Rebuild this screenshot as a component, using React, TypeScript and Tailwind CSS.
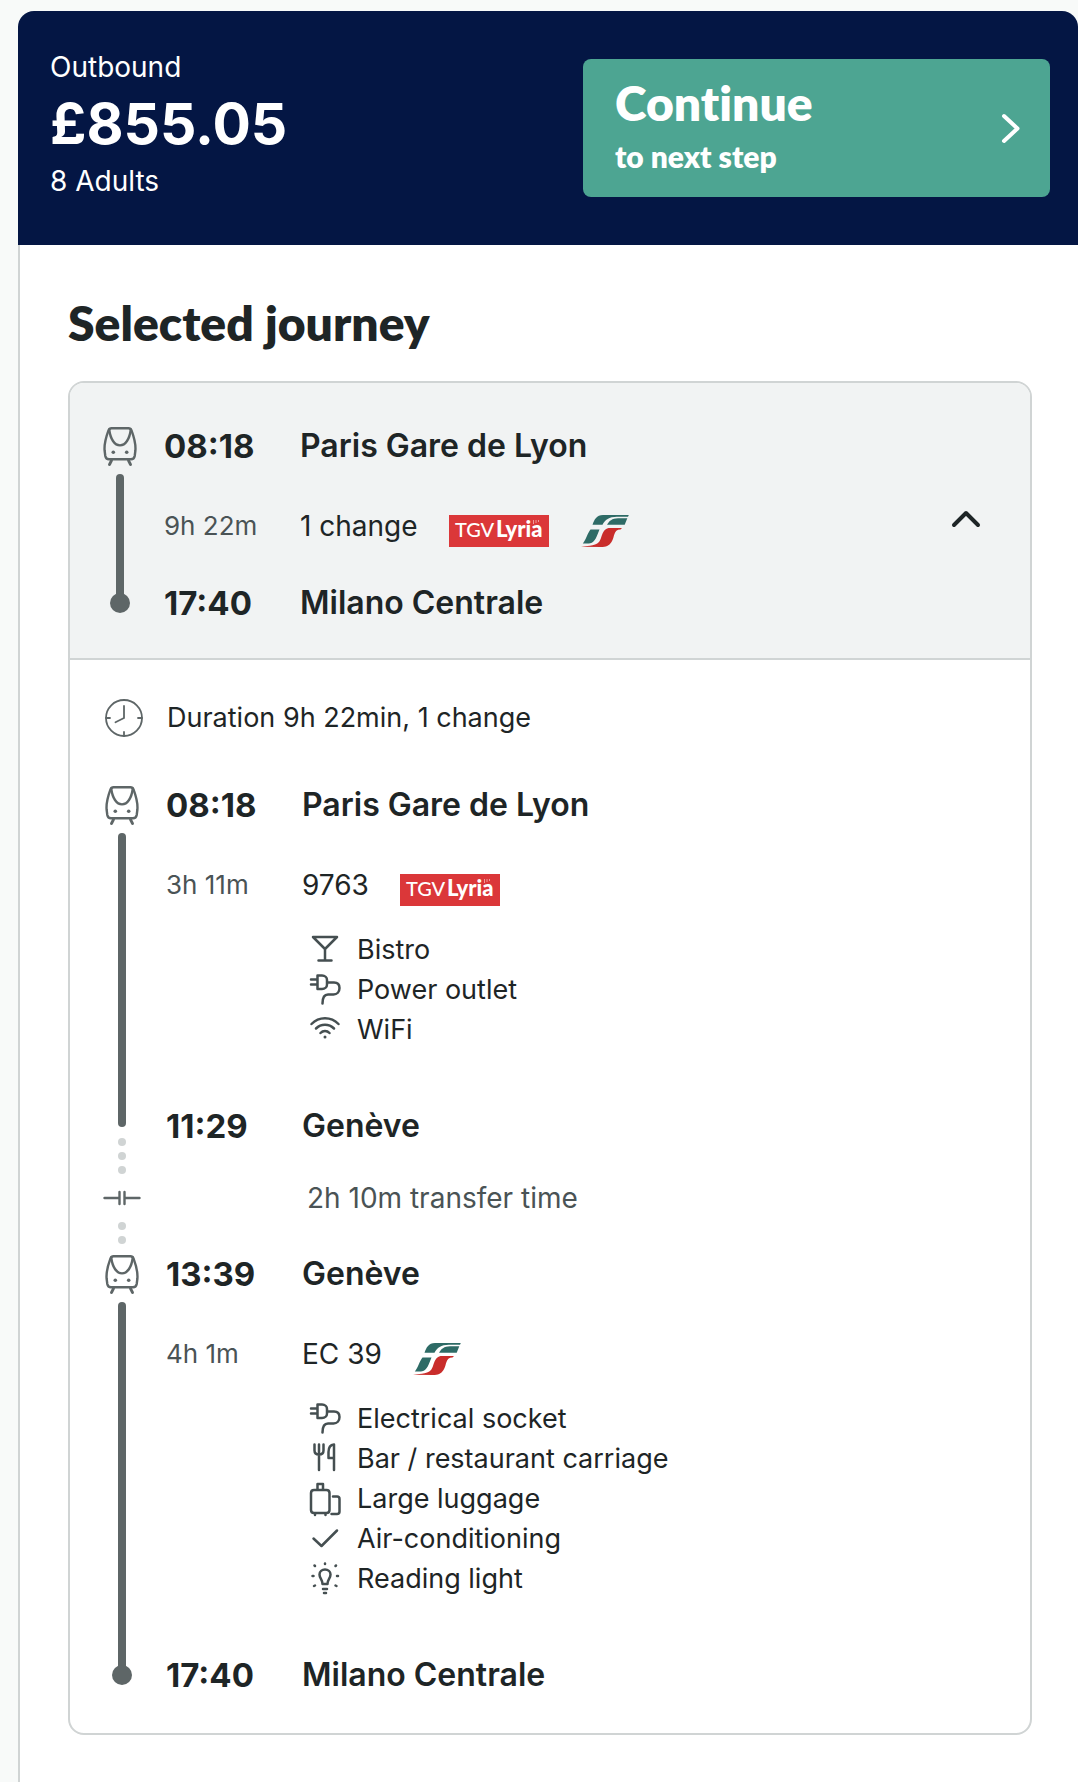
import React from "react";

const INK = "text-[#1e2526]";

function TrainIcon() {
  return (
    <svg width="34" height="40" viewBox="0 0 34 40" fill="none" stroke="#5e6667" strokeWidth="2.400" strokeLinecap="round" strokeLinejoin="round" aria-hidden="true" className="shrink-0">
      <path d="M8.500 2.200H25.500C27 2.200 28 3 28.600 4.600C30.600 10 33 17 32.400 24.500L31.700 30C31.300 32.200 30 33.200 28 33.200H6C4 33.200 2.700 32.200 2.300 30L1.600 24.500C1 17 3.400 10 5.400 4.600C6 3 7 2.200 8.500 2.200Z" />
      <path d="M6.200 3.500C7.400 13 11.500 19.400 17 19.400S26.600 13 27.800 3.500" />
      <path d="M8.500 34.500L6.500 38.500M25.500 34.500L27.500 38.500" strokeWidth="2.800" />
      <circle cx="10.300" cy="26.300" r="1.800" fill="#5e6667" stroke="none" />
      <circle cx="23.700" cy="26.300" r="1.800" fill="#5e6667" stroke="none" />
    </svg>
  );
}

function ClockIcon() {
  return (
    <svg width="38" height="40" viewBox="0 0 38 40" fill="none" stroke="#5e6667" strokeWidth="1.800" strokeLinecap="round" aria-hidden="true">
      <circle cx="19" cy="20" r="18" />
      <path d="M19 8V20L10.500 24.300M19 34V38M1 20H5M33 20H37" />
    </svg>
  );
}

function LyriaLogo() {
  return (
    <svg width="100" height="32" viewBox="0 0 100 32" role="img" aria-label="TGV Lyria">
      <rect width="100" height="32" fill="#db3739" />
      <text x="6" y="22" fontFamily="Lato, sans-serif" fontWeight="500" fontSize="20" fill="#fff">TGV</text>
      <text x="47" y="22" fontFamily="Lato, sans-serif" fontWeight="900" fontSize="22" fill="#fff">Lyria</text>
      <path d="M84.500 5V9M87 5V8M89.500 5V7" stroke="#ee9a9a" strokeWidth="1" />
    </svg>
  );
}

function TrenitaliaLogo() {
  return (
    <svg width="48" height="32" viewBox="0 0 48 32" role="img" aria-label="Trenitalia">
      <path d="M11.500 9.800C13.500 4.500 15.500 0 22 0H47.800L47 1.800H36C28 1.800 24 5 21.500 9.800Z" fill="#2e6b66" />
      <path d="M26 9.800C28 6 31 3.200 37 3.200H46.300L43.700 9.800Z" fill="#2e6b66" />
      <path d="M9.500 14.500H18.500C16 20 14.500 28 8 28.500H1.800C5 25 6.500 18 9.500 14.500Z" fill="#2e6b66" />
      <path d="M0 31.800C4 31 14 31.500 18 27C21.500 23 20.500 13 29 13H41L39.500 14.500C32 14.500 34 22 30.500 27C28 31 25 32 20 32Z" fill="#c92d2b" />
    </svg>
  );
}

function TransferIcon() {
  return (
    <svg width="38" height="16" viewBox="0 0 38 16" fill="none" stroke="#5e6667" strokeWidth="2.400" strokeLinecap="round" aria-hidden="true">
      <path d="M1.500 8H16.500M21.500 8H36.500M16.500 2V14M21.500 2V14" />
    </svg>
  );
}

const icons: Record<string, React.ReactNode> = {
  glass: <path d="M4 5H28L16 17ZM16 17V28.500M9.500 28.500H22.500" />,
  plug: (
    <path d="M8.500 3.500H13C16 3.500 18 5.500 18 8V12.500C18 15 16 17 13 17H8.500ZM2 7.500H8.500M2 12.500H8.500M18 10.500H25C28.500 10.500 30.500 12.500 30.500 16C30.500 20 28 22.500 24.500 22.500H19C15.500 22.500 13.500 25 13.500 31.500" />
  ),
  wifi: (
    <>
      <path d="M2.500 12C10 4.300 22 4.300 29.500 12M7 16.500C12 11.500 20 11.500 25 16.500M11.500 21C14 18.300 18 18.300 20.500 21" />
      <circle cx="16" cy="25" r="1.500" fill="currentColor" stroke="none" />
    </>
  ),
  cutlery: (
    <path d="M5.500 3.500V9.500C5.500 12 7 13.500 10 13.500S14.500 12 14.500 9.500V3.500M10 3.500V29M25 29V3.500C21 4 19.500 7.500 19.500 11V17H25" />
  ),
  luggage: (
    <path d="M5 9H17.500C19.500 9 20.500 10 20.500 12V29C20.500 31 19.500 32 17.500 32H5C3 32 2 31 2 29V12C2 10 3 9 5 9ZM8.500 9V3H14V9M6 32V34M16.500 32V34M24 15.500H28C29.500 15.500 30.500 16.500 30.500 18V30.500C30.500 32 29.500 33 28 33H22.500" />
  ),
  check: <path d="M4.500 17.500L12.500 25L28 9.500" />,
  bulb: (
    <path d="M13.500 23C13.500 18.500 10.500 17.500 10.500 13.500C10.500 10.500 13 8.500 16 8.500S21.500 10.500 21.500 13.500C21.500 17.500 18.500 18.500 18.500 23ZM14 28H18M15 32H17M16 2.500V3M5.500 4.500L6 5M27 4.500L26.500 5M3.500 15H4.500M28 15H29M5 25L6 24.500M27.500 25L26.500 24.500" />
  ),
};

function Amenities({ items }: { items: [string, string][] }) {
  return (
    <ul className="mt-6 pl-[143px] text-[27px]">
      {items.map(([icon, label]) => (
        <li key={label} className="flex h-10 items-center gap-4">
          <svg width="32" height="36" viewBox="0 0 32 36" fill="none" stroke="currentColor" strokeWidth="2.500" strokeLinecap="round" strokeLinejoin="round" aria-hidden="true" className="shrink-0 text-[#454f51]">
            {icons[icon]}
          </svg>
          <span>{label}</span>
        </li>
      ))}
    </ul>
  );
}

function Stop({ time, station }: { time: string; station: string }) {
  return (
    <div className="flex leading-10">
      <time className="w-[136px] shrink-0 text-[33px] font-bold">{time}</time>
      <span className="text-[32px] font-semibold">{station}</span>
    </div>
  );
}

function Ride({ duration, service, children }: { duration: string; service: string; children: React.ReactNode }) {
  return (
    <div className="mt-10 flex">
      <span className="w-[136px] shrink-0 text-[26px] text-[#4a5355]">{duration}</span>
      <span>{service}</span>
      <span className="flex gap-8 pt-[9px] pl-[31px]">{children}</span>
    </div>
  );
}

function Dot() {
  return <span className="size-2 shrink-0 rounded-full bg-[#d0d4d4]" />;
}

function Leg({ end, children }: { end: "terminus" | "transfer"; children: React.ReactNode }) {
  return (
    <div className="flex gap-[27px]">
      <div className="flex w-[34px] shrink-0 flex-col items-center">
        <TrainIcon />
        {end === "terminus" ? (
          <>
            <span className="mt-2 w-2 flex-1 rounded-t-full bg-[#5e6667]" />
            <span className="-mt-1 mb-[10px] size-5 rounded-full bg-[#5e6667]" />
          </>
        ) : (
          <>
            <span className="mt-2 mb-[11px] w-2 flex-1 rounded-full bg-[#5e6667]" />
            <Dot />
          </>
        )}
      </div>
      <div className="min-w-0 flex-1">{children}</div>
    </div>
  );
}

export default function App() {
  return (
    <div className={`min-h-screen bg-[#f8faf9] pt-[11px] pl-[18px] font-[Inter,sans-serif] text-[28px] leading-10 ${INK}`}>
      <main className="flex min-h-[1771px] flex-col">
        <header className="flex items-start justify-between rounded-t-2xl bg-[#041644] pt-12 pr-7 pb-11 pl-8 text-white">
          <div className="-mt-3">
            <p>Outbound</p>
            <p className="text-[57px] leading-[74px] font-bold">£855.05</p>
            <p>8 Adults</p>
          </div>
          <button type="button" className="flex h-[138px] w-[467px] items-center justify-between rounded-lg bg-[#4da592] pr-7 pl-8 text-left font-[Lato,sans-serif] font-extrabold [font-variant-ligatures:none]">
            <span>
              <span className="block text-[48px] leading-[56px]">Continue</span>
              <span className="block text-[30px] leading-[50px]">to next step</span>
            </span>
            <svg width="22" height="32" viewBox="0 0 22 32" fill="none" stroke="#fff" strokeWidth="4" strokeLinecap="round" strokeLinejoin="round" aria-hidden="true">
              <path d="M4 4L17.500 16.500L4 29" />
            </svg>
          </button>
        </header>
        <div className="flex-1 border-l-2 border-[#d0d4d4] bg-white pt-12 pr-[46px] pb-[47px] pl-12">
          <h1 className="mb-7 font-[Lato,sans-serif] text-[48px] leading-[60px] font-extrabold">Selected journey</h1>
          <section className="rounded-2xl border-2 border-[#d0d4d4]">
            <div className="flex items-center justify-between rounded-t-[14px] border-b-2 border-[#d0d4d4] bg-[#f1f3f3] pt-[43px] pr-12 pb-[35px] pl-[33px]">
              <Leg end="terminus">
                <Stop time="08:18" station="Paris Gare de Lyon" />
                <Ride duration="9h 22m" service="1 change">
                  <LyriaLogo />
                  <TrenitaliaLogo />
                </Ride>
                <div className="mt-9">
                  <Stop time="17:40" station="Milano Centrale" />
                </div>
              </Leg>
              <button type="button" aria-label="Hide journey details" aria-expanded="true" className="pb-3">
                <svg width="32" height="20" viewBox="0 0 32 20" fill="none" stroke="#1e2526" strokeWidth="4" strokeLinecap="round" strokeLinejoin="round" aria-hidden="true">
                  <path d="M4 16L16 4L28 16" />
                </svg>
              </button>
            </div>
            <div className="pt-[38px] pr-8 pb-[38px] pl-[35px]">
              <p className="mb-[47px] flex gap-6 text-[27px]">
                <ClockIcon />
                <span>Duration 9h 22min, 1 change</span>
              </p>
              <Leg end="transfer">
                <Stop time="08:18" station="Paris Gare de Lyon" />
                <Ride duration="3h 11m" service="9763">
                  <LyriaLogo />
                </Ride>
                <Amenities items={[["glass", "Bistro"], ["plug", "Power outlet"], ["wifi", "WiFi"]]} />
                <div className="mt-14">
                  <Stop time="11:29" station="Genève" />
                </div>
              </Leg>
              <div className="flex gap-[27px]">
                <div className="flex w-[34px] shrink-0 flex-col items-center gap-[6px] pt-[6px] pb-[10px]">
                  <Dot />
                  <Dot />
                  <span className="my-[10px] flex">
                    <TransferIcon />
                  </span>
                  <Dot />
                  <Dot />
                </div>
                <p className="pt-8 pl-[141px] text-[#4a5355]">2h 10m transfer time</p>
              </div>
              <Leg end="terminus">
                <Stop time="13:39" station="Genève" />
                <Ride duration="4h 1m" service="EC 39">
                  <TrenitaliaLogo />
                </Ride>
                <Amenities
                  items={[
                    ["plug", "Electrical socket"],
                    ["cutlery", "Bar / restaurant carriage"],
                    ["luggage", "Large luggage"],
                    ["check", "Air-conditioning"],
                    ["bulb", "Reading light"],
                  ]}
                />
                <div className="mt-14">
                  <Stop time="17:40" station="Milano Centrale" />
                </div>
              </Leg>
            </div>
          </section>
        </div>
      </main>
    </div>
  );
}
